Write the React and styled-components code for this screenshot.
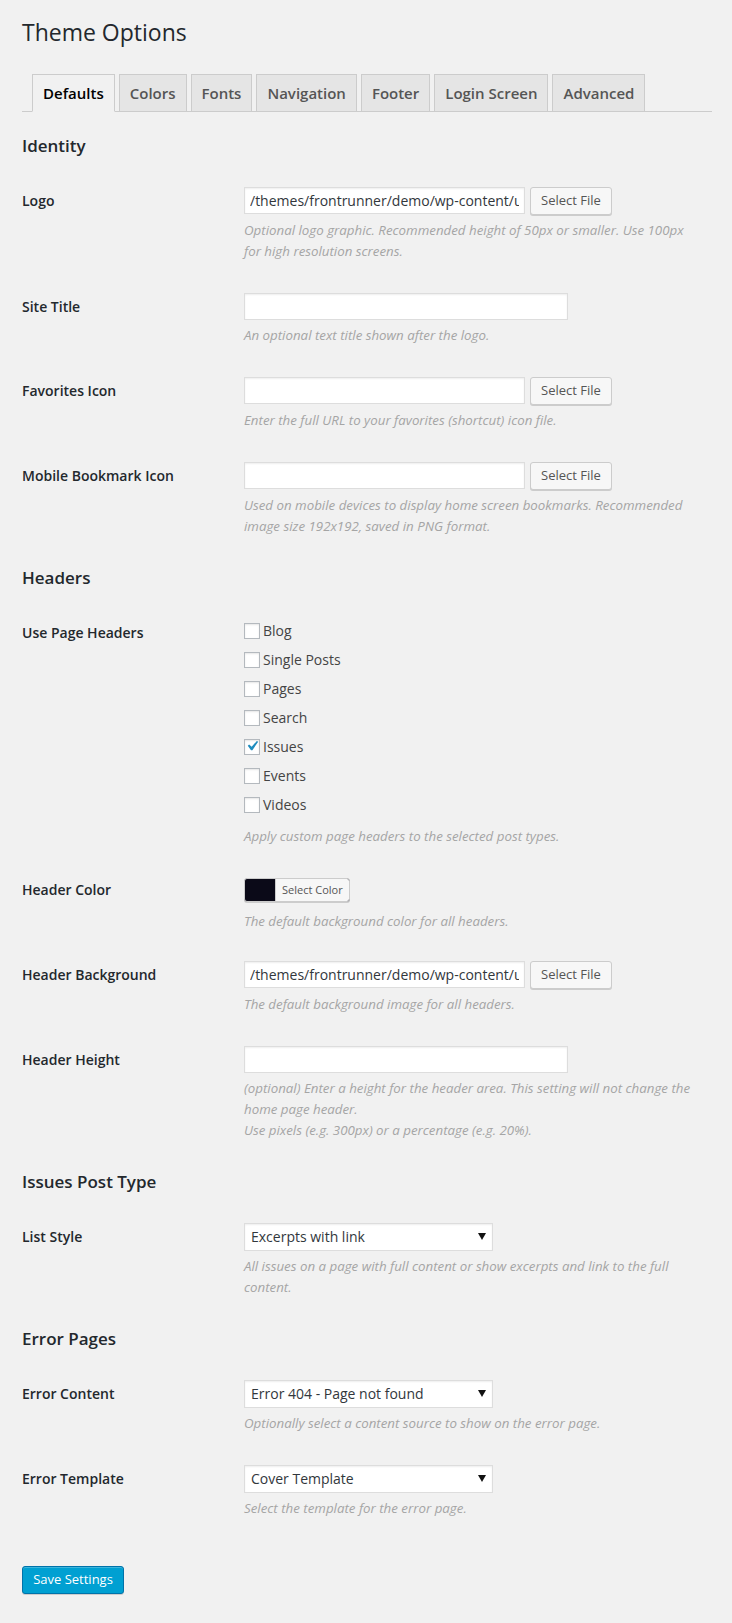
import React from "react";
import styled, { createGlobalStyle } from "styled-components";

const GlobalStyle = createGlobalStyle`
  html, body {
    margin: 0;
    padding: 0;
    background: #f1f1f1;
  }
  body {
    font-family: "Open Sans", "Liberation Sans", sans-serif;
    font-size: 13px;
    color: #444;
  }
`;

const TABS = ["Defaults", "Colors", "Fonts", "Navigation", "Footer", "Login Screen", "Advanced"];
const HEADER_TYPES = [
  { name: "Blog", checked: false },
  { name: "Single Posts", checked: false },
  { name: "Pages", checked: false },
  { name: "Search", checked: false },
  { name: "Issues", checked: true },
  { name: "Events", checked: false },
  { name: "Videos", checked: false },
];
const UPLOAD_PATH = "/themes/frontrunner/demo/wp-content/uploads/2016/02/logo.png";

class App extends React.Component {
  render() {
    return (
      <Wrap>
        <GlobalStyle />
        <Title>Theme Options</Title>
        <TabBar>
          {TABS.map((t) => (
            <Tab key={t} $active={t === "Defaults"}>{t}</Tab>
          ))}
        </TabBar>

        <SectionTitle $first>Identity</SectionTitle>
        <Row>
          <Label>Logo</Label>
          <Field>
            <Inline>
              <TextInput $w={281} readOnly value={UPLOAD_PATH} />
              <Button>Select File</Button>
            </Inline>
            <Desc>
              Optional logo graphic. Recommended height of 50px or smaller. Use 100px
              <br />
              for high resolution screens.
            </Desc>
          </Field>
        </Row>
        <Row>
          <Label>Site Title</Label>
          <Field>
            <TextInput $w={324} readOnly value="" />
            <Desc>An optional text title shown after the logo.</Desc>
          </Field>
        </Row>
        <Row>
          <Label>Favorites Icon</Label>
          <Field>
            <Inline>
              <TextInput $w={281} readOnly value="" />
              <Button>Select File</Button>
            </Inline>
            <Desc>Enter the full URL to your favorites (shortcut) icon file.</Desc>
          </Field>
        </Row>
        <Row>
          <Label>Mobile Bookmark Icon</Label>
          <Field>
            <Inline>
              <TextInput $w={281} readOnly value="" />
              <Button>Select File</Button>
            </Inline>
            <Desc>
              Used on mobile devices to display home screen bookmarks. Recommended
              <br />
              image size 192x192, saved in PNG format.
            </Desc>
          </Field>
        </Row>

        <SectionTitle>Headers</SectionTitle>
        <Row>
          <Label $top={4}>Use Page Headers</Label>
          <Field>
            <CheckList>
              {HEADER_TYPES.map((h) => (
                <CheckItem key={h.name}>
                  <Box>
                    {h.checked ? (
                      <CheckMark width="20" height="20" viewBox="0 0 20 20">
                        <path d="M14.83 4.89l1.34.94-5.81 8.38H9.02L5.78 9.67l1.34-1.25 2.57 2.4z" fill="#1e8cbe" />
                      </CheckMark>
                    ) : null}
                  </Box>
                  {h.name}
                </CheckItem>
              ))}
            </CheckList>
            <Desc $gap={7}>Apply custom page headers to the selected post types.</Desc>
          </Field>
        </Row>
        <Row $bottom={14}>
          <Label $top={2}>Header Color</Label>
          <Field>
            <ColorButton $color="#0b0a18">
              <ColorText>Select Color</ColorText>
            </ColorButton>
            <Desc>The default background color for all headers.</Desc>
          </Field>
        </Row>
        <Row>
          <Label>Header Background</Label>
          <Field>
            <Inline>
              <TextInput $w={281} readOnly value={UPLOAD_PATH} />
              <Button>Select File</Button>
            </Inline>
            <Desc>The default background image for all headers.</Desc>
          </Field>
        </Row>
        <Row>
          <Label>Header Height</Label>
          <Field>
            <TextInput $w={324} readOnly value="" />
            <Desc>
              (optional) Enter a height for the header area. This setting will not change the
              <br />
              home page header.
              <br />
              Use pixels (e.g. 300px) or a percentage (e.g. 20%).
            </Desc>
          </Field>
        </Row>

        <SectionTitle>Issues Post Type</SectionTitle>
        <Row>
          <Label>List Style</Label>
          <Field>
            <Select value="Excerpts with link" />
            <Desc>
              All issues on a page with full content or show excerpts and link to the full
              <br />
              content.
            </Desc>
          </Field>
        </Row>

        <SectionTitle>Error Pages</SectionTitle>
        <Row>
          <Label>Error Content</Label>
          <Field>
            <Select value="Error 404 - Page not found" />
            <Desc>Optionally select a content source to show on the error page.</Desc>
          </Field>
        </Row>
        <Row>
          <Label>Error Template</Label>
          <Field>
            <Select value="Cover Template" />
            <Desc>Select the template for the error page.</Desc>
          </Field>
        </Row>

        <Submit>
          <PrimaryButton>Save Settings</PrimaryButton>
        </Submit>
      </Wrap>
    );
  }
}

const Select = ({ value }) => (
  <SelectBox>
    <SelectText>{value}</SelectText>
    <Arrow>
      <svg width="8" height="7" viewBox="0 0 8 7">
        <path d="M0 0h8L4 7z" fill="#111" />
      </svg>
    </Arrow>
  </SelectBox>
);

const Wrap = styled.div`
  padding: 0 20px 30px 22px;
`;

const Title = styled.h1`
  margin: 0;
  padding: 18px 0 4px 0;
  font-size: 23px;
  font-weight: 400;
  line-height: 29px;
  color: #23282d;
`;

const TabBar = styled.div`
  display: flex;
  align-items: flex-end;
  gap: 4px;
  margin-top: 23px;
  padding-left: 10px;
  border-bottom: 1px solid #ccc;
`;

const Tab = styled.div`
  height: 36px;
  line-height: 36px;
  padding: 0 10px;
  margin-bottom: -1px;
  font-size: 15px;
  font-weight: 600;
  border: 1px solid #ccc;
  border-bottom-color: ${(p) => (p.$active ? "#f1f1f1" : "#ccc")};
  background: ${(p) => (p.$active ? "#f1f1f1" : "#e5e5e5")};
  color: ${(p) => (p.$active ? "#000" : "#555")};
`;

const SectionTitle = styled.h2`
  margin: ${(p) => (p.$first ? "22px" : "13px")} 0 14px 0;
  font-size: 17px;
  font-weight: 600;
  line-height: 24px;
  color: #23282d;
`;

const Row = styled.div`
  display: grid;
  grid-template-columns: 222px 1fr;
  padding: 15px 10px ${(p) => (p.$bottom != null ? p.$bottom : 16)}px 0;
`;

const Label = styled.div`
  padding-top: ${(p) => (p.$top != null ? p.$top : 4)}px;
  font-size: 14px;
  font-weight: 600;
  line-height: 20px;
  color: #23282d;
`;

const Field = styled.div`
  display: flex;
  flex-direction: column;
  align-items: flex-start;
`;

const Inline = styled.div`
  display: flex;
  align-items: flex-start;
  gap: 5px;
`;

const TextInput = styled.input`
  box-sizing: border-box;
  width: ${(p) => p.$w}px;
  height: 27px;
  margin: 0;
  padding: 0 5px;
  font-family: "Open Sans", "Liberation Sans", sans-serif;
  font-size: 14px;
  color: #32373c;
  background: #fff;
  border: 1px solid #ddd;
  box-shadow: inset 0 1px 2px rgba(0, 0, 0, 0.07);
  outline: none;
`;

const Button = styled.div`
  box-sizing: border-box;
  height: 28px;
  line-height: 25px;
  padding: 0 10px 1px;
  font-size: 13px;
  color: #555;
  background: #f7f7f7;
  border: 1px solid #ccc;
  border-radius: 3px;
  box-shadow: 0 1px 0 #ccc;
  white-space: nowrap;
`;

const Desc = styled.p`
  margin: ${(p) => (p.$gap != null ? p.$gap : 5)}px 0 0 0;
  font-size: 13.3px;
  font-style: italic;
  line-height: 21px;
  color: #a5a5a5;
`;

const CheckList = styled.div`
  display: flex;
  flex-direction: column;
  margin-top: -3px;
`;

const CheckItem = styled.div`
  display: flex;
  align-items: center;
  height: 29px;
  font-size: 14px;
  color: #444;
`;

const Box = styled.span`
  box-sizing: border-box;
  display: flex;
  align-items: center;
  justify-content: center;
  width: 16px;
  height: 16px;
  margin-right: 3px;
  background: #fff;
  border: 1px solid #b4b9be;
  box-shadow: inset 0 1px 2px rgba(0, 0, 0, 0.1);
  overflow: visible;
`;

const CheckMark = styled.svg`
  flex: none;
  margin: -2px -3px 0 -3px;
`;

const ColorButton = styled.div`
  box-sizing: border-box;
  display: flex;
  height: 24px;
  padding-left: 30px;
  margin-bottom: 4px;
  background: ${(p) => p.$color};
  border: 1px solid #ccc;
  border-radius: 3px;
  box-shadow: 0 1px 0 #ccc;
  overflow: hidden;
`;

const ColorText = styled.span`
  padding: 0 6px;
  font-size: 11px;
  line-height: 22px;
  color: #555;
  background: #f7f7f7;
  border-left: 1px solid #ccc;
`;

const SelectBox = styled.div`
  position: relative;
  box-sizing: border-box;
  width: 249px;
  height: 28px;
  padding: 0 24px 0 6px;
  background: #fff;
  border: 1px solid #ddd;
  box-shadow: inset 0 1px 2px rgba(0, 0, 0, 0.07);
`;

const SelectText = styled.span`
  font-size: 14px;
  line-height: 26px;
  color: #32373c;
`;

const Arrow = styled.span`
  position: absolute;
  right: 6px;
  top: 9px;
  display: flex;
`;

const Submit = styled.div`
  margin-top: 31px;
`;

const PrimaryButton = styled.div`
  box-sizing: border-box;
  display: inline-block;
  width: 102px;
  height: 28px;
  line-height: 25px;
  padding: 0 10px 1px;
  font-size: 13px;
  text-align: center;
  color: #fff;
  background: #00a0d2;
  border: 1px solid #0073aa;
  border-radius: 3px;
  box-shadow: inset 0 1px 0 rgba(120, 200, 230, 0.5), 0 1px 0 rgba(0, 0, 0, 0.15);
`;

export default App;
